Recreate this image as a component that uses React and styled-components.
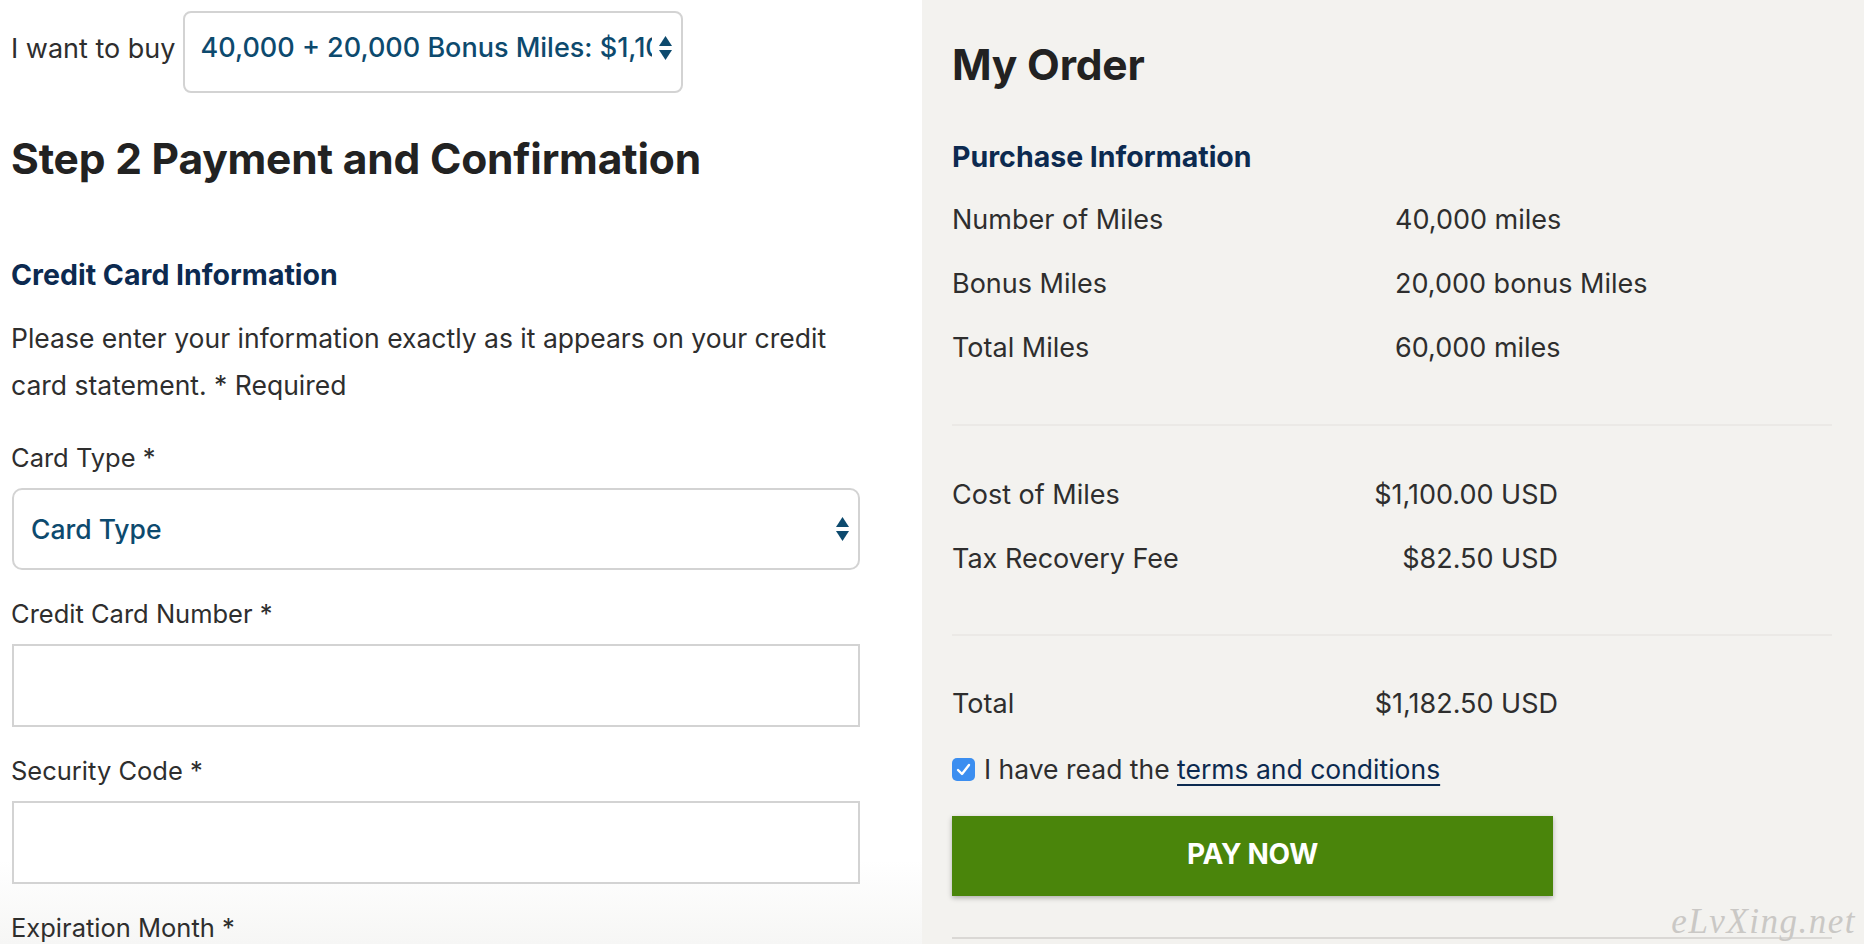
import React from "react";
import styled, { createGlobalStyle } from "styled-components";

const GlobalStyle = createGlobalStyle`
  html, body {
    margin: 0;
    padding: 0;
    background: #fff;
  }
  body {
    font-family: Inter, "Liberation Sans", Arial, sans-serif;
    color: #2e2e2e;
    -webkit-font-smoothing: antialiased;
  }
  * {
    box-sizing: border-box;
  }
`;

const Page = styled.div`
  display: grid;
  grid-template-columns: 922px 1fr;
  width: 1864px;
  height: 944px;
  overflow: hidden;
`;

const FormColumn = styled.section`
  display: flex;
  flex-direction: column;
  padding: 11px 0 0 11px;
  background: linear-gradient(#fff 0, #fff 860px, #f6f6f5 944px);
`;

const BuyRow = styled.div`
  display: flex;
  align-items: flex-start;
  gap: 7px;
`;

const BuyLabel = styled.span`
  font-size: 27px;
  line-height: 30px;
  margin-top: 23px;
  color: #2e2e2e;
`;

const PickerBox = styled.div`
  display: flex;
  align-items: center;
  width: ${(p) => p.$width}px;
  height: 82px;
  padding: 0 8px ${(p) => (p.$compact ? 8 : 0)}px ${(p) => (p.$compact ? 16 : 17)}px;
  border: 2px solid #d3d3d3;
  border-radius: ${(p) => (p.$compact ? 8 : 10)}px;
  background: #fff;
  color: #0d4a6e;
  font-size: ${(p) => (p.$compact ? 27 : 26.5)}px;
  font-weight: 500;
  margin-left: ${(p) => (p.$compact ? 0 : 1)}px;
`;

const PickerValue = styled.span`
  display: block;
  flex: ${(p) => (p.$clip ? "0 0 451px" : "1")};
  overflow: hidden;
  white-space: nowrap;
  line-height: 30px;
`;

const Arrows = styled.svg`
  margin-left: auto;
  flex: none;
`;

const Title = styled.h1`
  margin: ${(p) => p.$top}px 0 0;
  font-size: 42.5px;
  line-height: 52px;
  font-weight: 700;
  color: #222;
  letter-spacing: -0.2px;
`;

const SectionHeading = styled.h2`
  margin: ${(p) => p.$top}px 0 0;
  font-size: 28.5px;
  line-height: 34px;
  font-weight: 700;
  color: #0c2a50;
`;

const Intro = styled.p`
  margin: 23px 0 0;
  width: 845px;
  font-size: 26.5px;
  line-height: 47px;
  color: #2e2e2e;
`;

const Field = styled.div`
  display: flex;
  flex-direction: column;
  margin-top: ${(p) => p.$top}px;
`;

const FieldLabel = styled.label`
  font-size: 25.5px;
  line-height: 30px;
  color: #2e2e2e;
  margin-bottom: 15px;
`;

const TextInput = styled.input`
  width: 848px;
  height: 83px;
  margin-left: 1px;
  border: 2px solid #d3d3d3;
  border-radius: 0;
  background: #fff;
  font: inherit;
  font-size: 26px;
  padding: 0 16px;
  outline: none;
`;

const OrderColumn = styled.aside`
  position: relative;
  display: flex;
  flex-direction: column;
  padding: 39px 32px 0 30px;
  background: #f3f2ef;
`;

const OrderRow = styled.div`
  display: flex;
  align-items: center;
  height: 64px;
  width: ${(p) => (p.$split ? "606px" : "auto")};
  justify-content: ${(p) => (p.$split ? "space-between" : "flex-start")};
  font-size: 27px;
  line-height: 30px;
  color: #2e2e2e;
`;

const RowLabel = styled.span`
  width: ${(p) => (p.$split ? "auto" : "443px")};
`;

const RowGroup = styled.div`
  display: flex;
  flex-direction: column;
  margin-top: ${(p) => p.$top}px;
`;

const Rule = styled.hr`
  margin: ${(p) => p.$top}px 0 0;
  border: 0;
  height: 2px;
  background: ${(p) => (p.$strong ? "#dad8d5" : "#ebe9e6")};
`;

const AgreeRow = styled.label`
  display: flex;
  align-items: center;
  gap: 9px;
  margin-top: 18px;
  font-size: 26.5px;
  line-height: 30px;
  color: #2e2e2e;
`;

const CheckBox = styled.span`
  display: flex;
  align-items: center;
  justify-content: center;
  width: 23px;
  height: 23px;
  border-radius: 5px;
  background: #3b8ef0;
`;

const TermsLink = styled.a`
  color: #0c2a50;
  text-decoration: underline;
  text-decoration-thickness: 2px;
  text-underline-offset: 5px;
`;

const PayButton = styled.button`
  width: 601px;
  height: 80px;
  margin-top: 32px;
  padding-bottom: 6px;
  border: 0;
  background: #4a850b;
  color: #fff;
  font-family: inherit;
  font-size: 28px;
  font-weight: 700;
  letter-spacing: -0.3px;
  box-shadow: 0 2px 5px rgba(0, 0, 0, 0.28);
  cursor: pointer;
`;

const Watermark = styled.span`
  position: absolute;
  right: 8px;
  bottom: 16px;
  font-family: "Liberation Serif", "DejaVu Serif", serif;
  font-style: italic;
  font-size: 35px;
  color: #cac8c5;
  letter-spacing: 1.5px;
`;

const SelectArrows = () => (
  <Arrows width="15" height="26" viewBox="0 0 15 26">
    <path d="M7.5 1 L14 11 H1 Z" fill="#0d4a6e" />
    <path d="M7.5 25 L14 15 H1 Z" fill="#0d4a6e" />
  </Arrows>
);

const milesRows = [
  ["Number of Miles", "40,000 miles"],
  ["Bonus Miles", "20,000 bonus Miles"],
  ["Total Miles", "60,000 miles"],
];

const costRows = [
  ["Cost of Miles", "$1,100.00 USD"],
  ["Tax Recovery Fee", "$82.50 USD"],
];

const fields = ["Credit Card Number *", "Security Code *"];

export default function App() {
  return (
    <>
      <GlobalStyle />
      <Page>
        <FormColumn>
          <BuyRow>
            <BuyLabel>I want to buy</BuyLabel>
            <PickerBox $width={500} $compact>
              <PickerValue $clip>40,000 + 20,000 Bonus Miles: $1,100.00 USD</PickerValue>
              <SelectArrows />
            </PickerBox>
          </BuyRow>

          <Title $top={40}>Step 2 Payment and Confirmation</Title>

          <SectionHeading $top={73}>Credit Card Information</SectionHeading>
          <Intro>
            Please enter your information exactly as it appears on your credit card
            statement. * Required
          </Intro>

          <Field $top={34}>
            <FieldLabel>Card Type *</FieldLabel>
            <PickerBox $width={848}>
              <PickerValue>Card Type</PickerValue>
              <SelectArrows />
            </PickerBox>
          </Field>

          {fields.map((label) => (
            <Field key={label} $top={29}>
              <FieldLabel>{label}</FieldLabel>
              <TextInput type="text" />
            </Field>
          ))}

          <Field $top={29}>
            <FieldLabel>Expiration Month *</FieldLabel>
          </Field>
        </FormColumn>

        <OrderColumn>
          <Title $top={0}>My Order</Title>
          <SectionHeading $top={49}>Purchase Information</SectionHeading>

          <RowGroup $top={14}>
            {milesRows.map(([label, value]) => (
              <OrderRow key={label}>
                <RowLabel>{label}</RowLabel>
                <span>{value}</span>
              </OrderRow>
            ))}
          </RowGroup>

          <Rule $top={44} />

          <RowGroup $top={37}>
            {costRows.map(([label, value]) => (
              <OrderRow key={label} $split>
                <RowLabel $split>{label}</RowLabel>
                <span>{value}</span>
              </OrderRow>
            ))}
          </RowGroup>

          <Rule $top={43} />

          <RowGroup $top={36}>
            <OrderRow $split>
              <RowLabel $split>Total</RowLabel>
              <span>$1,182.50 USD</span>
            </OrderRow>
          </RowGroup>

          <AgreeRow>
            <CheckBox>
              <svg width="15" height="13" viewBox="0 0 15 13">
                <path
                  d="M2 7 L6 11 L13 2"
                  fill="none"
                  stroke="#fff"
                  strokeWidth="2.4"
                  strokeLinecap="round"
                  strokeLinejoin="round"
                />
              </svg>
            </CheckBox>
            <span>
              I have read the <TermsLink href="#terms">terms and conditions</TermsLink>
            </span>
          </AgreeRow>

          <PayButton type="button">PAY NOW</PayButton>

          <Rule $top={41} $strong />

          <Watermark>eLvXing.net</Watermark>
        </OrderColumn>
      </Page>
    </>
  );
}
